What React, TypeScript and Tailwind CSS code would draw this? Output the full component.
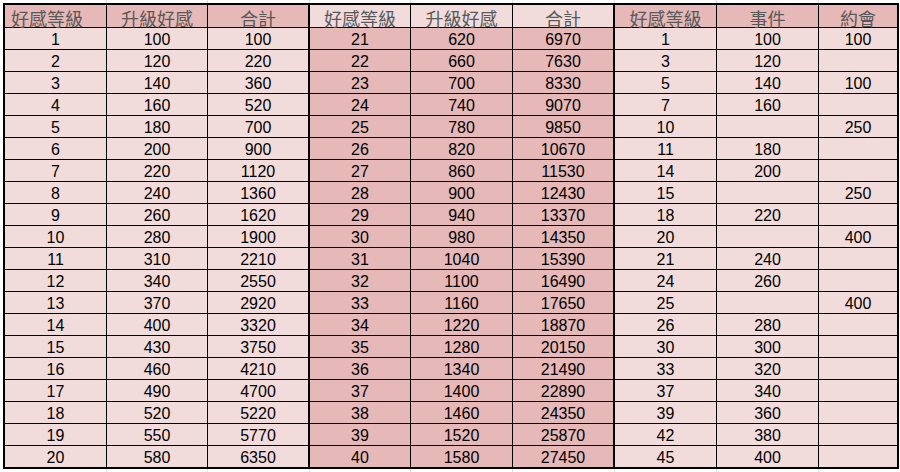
import React from "react";

const s1Up = [100,120,140,160,180,200,220,240,260,280,310,340,370,400,430,460,490,520,550,580];
const s1Tot = [100,220,360,520,700,900,1120,1360,1620,1900,2210,2550,2920,3320,3750,4210,4700,5220,5770,6350];
const s2Up = [620,660,700,740,780,820,860,900,940,980,1040,1100,1160,1220,1280,1340,1400,1460,1520,1580];
const s2Tot = [6970,7630,8330,9070,9850,10670,11530,12430,13370,14350,15390,16490,17650,18870,20150,21490,22890,24350,25870,27450];
const s3: [number, string, string][] = [
  [1,"100","100"],[3,"120",""],[5,"140","100"],[7,"160",""],[10,"","250"],
  [11,"180",""],[14,"200",""],[15,"","250"],[18,"220",""],[20,"","400"],
  [21,"240",""],[24,"260",""],[25,"","400"],[26,"280",""],[30,"300",""],
  [33,"320",""],[37,"340",""],[39,"360",""],[42,"380",""],[45,"400",""],
];

const DARK = "bg-[#e6b8b7]";
const LIGHT = "bg-[#f2dcdb]";

function GridStrip() {
  const xs = [106, 207, 309, 410, 512, 614, 716, 818];
  return (
    <div className="relative h-[3px] w-[900px]">
      {xs.map((x) => (
        <div key={x} className="absolute top-0 h-full w-px bg-[#e1e1e1]" style={{ left: x }} />
      ))}
    </div>
  );
}

export default function App() {
  const hdr = "h-full flex items-center justify-center pt-[4px] text-[18px] leading-[22px] text-[#595959] border-r border-black";
  const cell = "h-full text-center text-[16px] leading-[23px] text-black border-r border-black";
  return (
    <div className="w-[900px] h-[472px] bg-white overflow-hidden" style={{ fontFamily: '"Liberation Sans", "Noto Sans CJK TC", sans-serif' }}>
      <GridStrip />
      <div className="ml-[3px] w-[896px] border-2 border-black">
        <div className="flex h-[23px] border-b border-black" style={{ fontFamily: '"Noto Sans CJK TC", sans-serif' }}>
          <div className={`${DARK} ${hdr} w-[102px] !justify-start pl-[6px]`}>好感等級</div>
          <div className={`${DARK} ${hdr} w-[101px]`}>升級好感</div>
          <div className={`${DARK} ${hdr} w-[102px] border-r-2`}>合計</div>
          <div className={`${LIGHT} ${hdr} w-[101px]`}>好感等級</div>
          <div className={`${LIGHT} ${hdr} w-[102px]`}>升級好感</div>
          <div className={`${LIGHT} ${hdr} w-[102px] border-r-2`}>合計</div>
          <div className={`${DARK} ${hdr} w-[102px]`}>好感等級</div>
          <div className={`${DARK} ${hdr} w-[102px]`}>事件</div>
          <div className={`${DARK} ${hdr} w-[78px] border-r-0`}>約會</div>
        </div>
        {s1Up.map((_, i) => {
          const last = i === 19;
          return (
            <div key={i} className={`flex overflow-hidden ${last ? "h-[21px]" : "h-[22px] border-b border-black"}`}>
              <div className={`${LIGHT} ${cell} w-[102px]`}>{i + 1}</div>
              <div className={`${LIGHT} ${cell} w-[101px]`}>{s1Up[i]}</div>
              <div className={`${LIGHT} ${cell} w-[102px] border-r-2`}>{s1Tot[i]}</div>
              <div className={`${DARK} ${cell} w-[101px]`}>{i + 21}</div>
              <div className={`${DARK} ${cell} w-[102px]`}>{s2Up[i]}</div>
              <div className={`${DARK} ${cell} w-[102px] border-r-2`}>{s2Tot[i]}</div>
              <div className={`${LIGHT} ${cell} w-[102px]`}>{s3[i][0]}</div>
              <div className={`${LIGHT} ${cell} w-[102px]`}>{s3[i][1]}</div>
              <div className={`${LIGHT} ${cell} w-[78px] border-r-0`}>{s3[i][2]}</div>
            </div>
          );
        })}
      </div>
      <GridStrip />
    </div>
  );
}
